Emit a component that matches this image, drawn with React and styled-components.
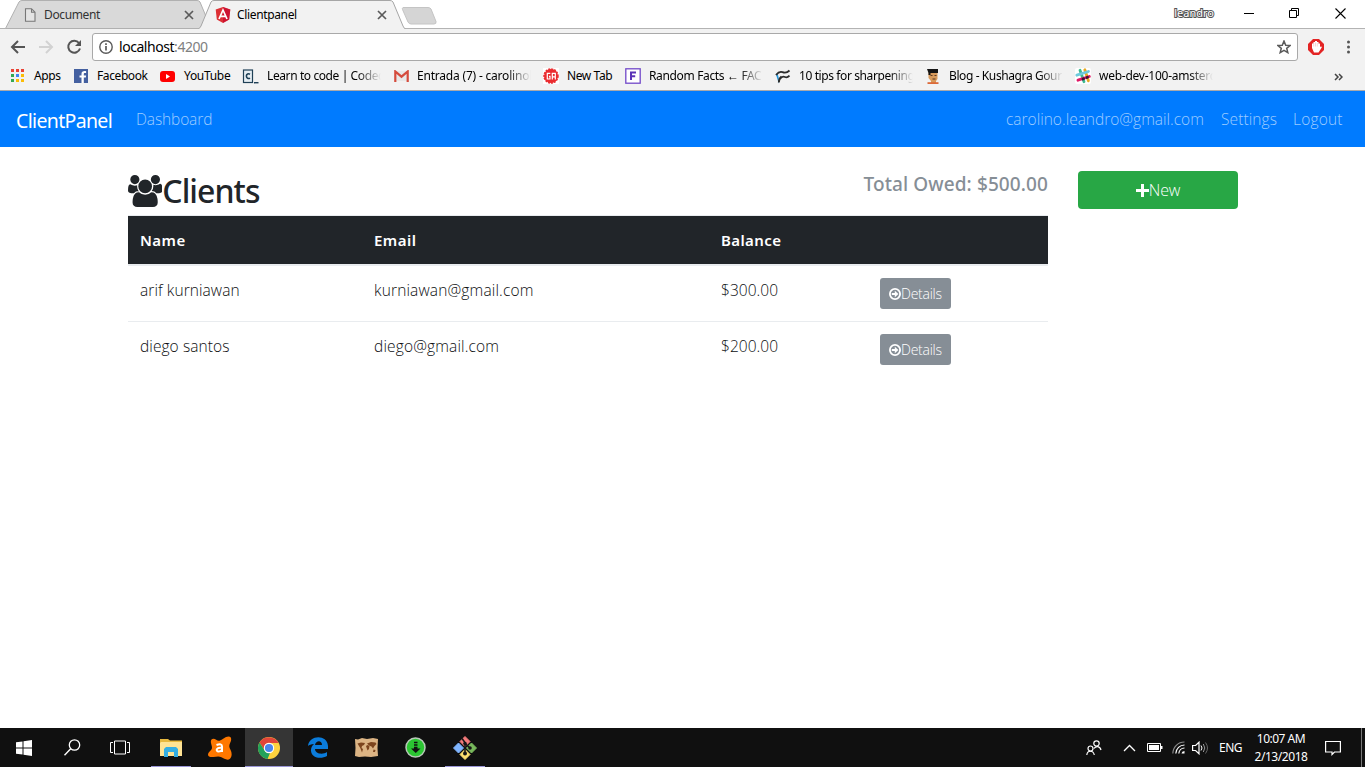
import React from "react";
import styled, { createGlobalStyle } from "styled-components";

const GlobalStyle = createGlobalStyle`
  * { box-sizing: border-box; }
  body { margin: 0; background: #fff; overflow: hidden; font-family: "Open Sans", "Noto Sans", sans-serif; }
  svg { display: block; flex: none; }
`;

const Screen = styled.div`
  width: 1365px;
  height: 767px;
  display: flex;
  flex-direction: column;
  background: #fff;
`;

/* ---------- Browser frame ---------- */
const TitleBar = styled.div`
  height: 29px;
  flex: none;
  display: flex;
  padding-left: 5px;
  border-bottom: 1px solid #b3b3b3;
  font: 400 12px/28px "Noto Sans", sans-serif;
`;
const Tab = styled.div`
  position: relative;
  width: 206px;
  height: 29px;
  flex: none;
  display: flex;
  align-items: center;
  padding: 0 17px 0 ${(p) => (p.$active ? 17 : 19)}px;
  margin-left: ${(p) => (p.$active ? -13 : 0)}px;
  z-index: ${(p) => (p.$active ? 2 : 1)};
`;
const TabShape = styled.svg`
  position: absolute;
  left: 0;
  top: 0;
  z-index: -1;
`;
const TabTitle = styled.span`
  flex: 1;
  margin-left: ${(p) => p.$gap}px;
  letter-spacing: ${(p) => p.$ls}px;
  color: ${(p) => (p.$active ? "#000" : "#333")};
  white-space: nowrap;
`;
const NewTab = styled.svg`
  margin: 6px 0 0 -3px;
`;
const WindowControls = styled.div`
  margin-left: auto;
  display: flex;
  align-items: center;
  padding-right: 19px;
`;
const Profile = styled.span`
  font-size: 11px;
  line-height: 26px;
  margin-top: -2px;
  letter-spacing: 0;
  color: #fff;
  -webkit-text-stroke: 2px #555;
  paint-order: stroke fill;
  margin-right: 29px;
`;
const Control = styled.svg`
  margin-left: ${(p) => p.$gap || 0}px;
  margin-top: ${(p) => p.$top || 0}px;
`;

const ToolBar = styled.div`
  height: 34px;
  flex: none;
  display: flex;
  align-items: center;
  padding: 0 10px 0 10px;
  background: #f2f2f2;
`;
const NavIcon = styled.svg`
  margin-right: ${(p) => p.$gap}px;
  margin-top: 2px;
`;
const Address = styled.div`
  width: 1206px;
  height: 28px;
  margin-top: 1px;
  display: flex;
  align-items: center;
  padding: 0 6px 0 6px;
  background: #fff;
  border: 1px solid #a9a9a9;
  border-radius: 3px;
  font: 400 14px/26px "Noto Sans", sans-serif;
  color: #000;
`;
const Url = styled.span`
  flex: 1;
  margin-left: 6px;
  letter-spacing: -0.45px;
  span { color: #808080; }
`;
const Bookmarks = styled.div`
  height: 28px;
  flex: none;
  display: flex;
  align-items: center;
  padding-left: 10px;
  background: #f2f2f2;
  border-bottom: 1px solid #a9a9ab;
  font: 400 12px/24px "Noto Sans", sans-serif;
  color: #000;
`;
const Bookmark = styled.div`
  width: ${(p) => p.$w}px;
  flex: none;
  display: flex;
  align-items: center;
  height: 27px;
  svg { margin-top: -1px; }
`;
const BookmarkText = styled.span`
  width: ${(p) => p.$w}px;
  margin: -1px 0 0 ${(p) => p.$gap}px;
  letter-spacing: ${(p) => p.$ls}px;
  white-space: nowrap;
  mask-image: ${(p) => (p.$fade ? "linear-gradient(90deg, #000 calc(100% - 24px), transparent)" : "none")};
`;
const More = styled.svg`
  margin-left: auto;
  margin-right: 22px;
`;

/* ---------- Client panel page ---------- */
const Navbar = styled.nav`
  height: 56px;
  flex: none;
  display: flex;
  align-items: center;
  padding: 0 22px 0 16px;
  background: #007bff;
  color: #fff;
`;
const Brand = styled.span`
  width: 120px;
  font: 400 19.5px/30px "Noto Sans", sans-serif;
  letter-spacing: -0.66px;
  padding-top: 3px;
`;
const NavLink = styled.a`
  font-size: 15.5px;
  font-weight: 300;
  line-height: 24px;
  color: rgba(255, 255, 255, 0.62);
  letter-spacing: ${(p) => p.$ls}px;
  width: ${(p) => p.$w}px;
  white-space: nowrap;
  margin-left: ${(p) => (p.$first ? "auto" : 0)};
`;
const Page = styled.main`
  flex: 1;
  display: flex;
  gap: 30px;
  padding: 24px 127px 0 128px;
  color: #212529;
`;
const Main = styled.section`
  width: 920px;
`;
const Heading = styled.div`
  height: 44px;
  display: flex;
  justify-content: space-between;
`;
const Title = styled.h2`
  margin: 0;
  display: flex;
  align-items: center;
  font: 500 32px/38px "Noto Sans", sans-serif;
  letter-spacing: -0.95px;
  height: 40px;
`;
const Total = styled.h5`
  margin: 0;
  font: 500 19px/26px "Noto Sans", sans-serif;
  letter-spacing: 0.1px;
  color: #868e96;
  white-space: nowrap;
`;
const Table = styled.div`
  border-top: 1px solid #e9ecef;
`;
const Row = styled.div`
  display: grid;
  grid-template-columns: 234px 347px 159px 1fr;
  height: ${(p) => (p.$first ? 55 : 57)}px;
  padding: 12px 12px 0;
  border-top: ${(p) => (p.$first ? 0 : 1)}px solid #e9ecef;
  font-size: 15.5px;
  font-weight: 300;
  line-height: 25px;
  color: #0c0e10;
`;
const HeadRow = styled(Row)`
  height: 50px;
  border-top: 0;
  border-bottom: 2px solid #e9ecef;
  background: #212529;
  color: #fff;
  font: 600 15px/25px "Noto Sans", sans-serif;
`;
const Cell = styled.span`
  letter-spacing: ${(p) => p.$ls || 0}px;
`;
const DetailsButton = styled.button`
  display: flex;
  align-items: center;
  width: 71px;
  height: 31px;
  padding: 1px 0 0 9px;
  border: 0;
  border-radius: 3px;
  background: #868e96;
  color: #fff;
  font: 300 14px/30px "Open Sans", sans-serif;
  letter-spacing: -0.25px;
`;
const NewButton = styled.button`
  width: 160px;
  height: 38px;
  display: flex;
  align-items: center;
  justify-content: center;
  border: 0;
  border-radius: 4px;
  background: #28a745;
  color: #fff;
  font: 300 16px/38px "Open Sans", sans-serif;
  letter-spacing: -0.2px;
`;

/* ---------- Taskbar ---------- */
const Taskbar = styled.footer`
  height: 39px;
  flex: none;
  display: flex;
  background: #101010;
  color: #fff;
`;
const Task = styled.div`
  width: ${(p) => p.$w || 49}px;
  height: 39px;
  display: flex;
  align-items: center;
  justify-content: center;
  background: ${(p) => (p.$active ? "#353535" : "transparent")};
  box-shadow: ${(p) => (p.$open ? "inset 0 -1px #9b97d8" : "none")};
  margin-left: ${(p) => p.$gap || 0}px;
  padding-left: ${(p) => p.$shift || 0}px;
`;
const Tray = styled.div`
  margin-left: auto;
  display: flex;
  align-items: center;
  font: 400 12px/18px "Noto Sans", sans-serif;
`;
const TrayItem = styled.div`
  width: ${(p) => p.$w}px;
  white-space: nowrap;
  letter-spacing: ${(p) => p.$ls || 0}px;
`;
const Clock = styled.div`
  width: 72px;
  text-align: center;
  margin-right: 8px;
  div { white-space: nowrap; }
  div:first-child { letter-spacing: -0.5px; }
  div:last-child { letter-spacing: -0.45px; }
`;
const ShowDesktop = styled.div`
  width: 4px;
  height: 39px;
  border-left: 1px solid #777;
`;

const CloseX = () => (
  <svg width="10" height="10" viewBox="0 0 10 10"><path d="M1 1l8 8M9 1l-8 8" stroke="#5a5a5a" strokeWidth="1.7" /></svg>
);

const UsersIcon = () => (
  <svg width="34.3" height="32" viewBox="0 -1536 1920 1792">
    <path transform="scale(1,-1)" fill="#212529" d="M593 640q-162 -5 -265 -128h-134q-82 0 -138 40.5t-56 118.5q0 353 124 353q6 0 43.5 -21t97.5 -42.5t119 -21.5q67 0 133 23q-5 -37 -5 -66q0 -159 93 -283zM1664 3q0 -120 -73 -189.5t-194 -69.5h-874q-121 0 -194 69.5t-73 189.5q0 53 3.5 103.5t14 109t26.5 108.5t43 97.5t62 81t85.5 53.5t111.5 20q10 0 43 -21.5t73 -48t107 -48t135 -21.5t135 21.5t107 48t73 48t43 21.5q61 0 111.5 -20t85.5 -53.5t62 -81t43 -97.5t26.5 -108.5t14 -109t3.5 -103.5zM640 1280q0 -106 -75 -181t-181 -75t-181 75t-75 181t75 181t181 75t181 -75t75 -181zM1344 896q0 -159 -112.5 -271.5t-271.5 -112.5t-271.5 112.5t-112.5 271.5t112.5 271.5t271.5 112.5t271.5 -112.5t112.5 -271.5zM1920 671q0 -78 -56 -118.5t-138 -40.5h-134q-103 123 -265 128q93 124 93 283q0 29 -5 66q66 -23 133 -23q59 0 119 21.5t97.5 42.5t43.5 21q124 0 124 -353zM1792 1280q0 -106 -75 -181t-181 -75t-181 75t-75 181t75 181t181 75t181 -75t75 -181z" />
  </svg>
);

const AppsIcon = () => (
  <svg width="14" height="14" viewBox="0 0 14 14">
    {["#ea4335", "#ea4335", "#ea4335", "#34a853", "#4285f4", "#fbbc05", "#34a853", "#fbbc05", "#fbbc05"].map((c, i) => (
      <rect key={i} x={1 + (i % 3) * 5} y={Math.floor(i / 3) * 5} width="3" height="3" fill={c} />
    ))}
  </svg>
);
const FacebookIcon = () => (
  <svg width="14" height="14" viewBox="0 0 14 14"><rect width="14" height="14" fill="#4460a0" /><path d="M9.8 14V8.6h2l.3-2.2H9.8V5.2c0-.7.3-1.1 1.1-1.1h1.2V2.2c-2.9-.5-4.6.4-4.6 2.7v1.5h-2v2.2h2V14z" fill="#fff" /></svg>
);
const YoutubeIcon = () => (
  <svg width="15" height="11" viewBox="0 0 15 11"><rect width="15" height="11" rx="3" fill="#f00" /><path d="M6 3l4 2.5L6 8z" fill="#fff" /></svg>
);
const CodecademyIcon = () => (
  <svg width="17" height="15" viewBox="0 0 17 15"><rect x="1.500" y="1" width="9" height="12.500" fill="#e6eef3" stroke="#1f4056" strokeWidth="1.200" /><path d="M8 5.200c-1.600-1-3.600-.4-3.600 1.900s2 3 3.600 2" fill="none" stroke="#1f4056" strokeWidth="1.600" /><path d="M12 13.700h4.500" stroke="#1f4056" strokeWidth="1.400" /></svg>
);
const GmailIcon = () => (
  <svg width="15" height="12" viewBox="0 0 15 12"><rect x="1" y="1" width="13" height="10" fill="#e8e8e8" /><path d="M1.300 12V1.500l6.200 5.200 6.200-5.200V12" fill="none" stroke="#d54b3d" strokeWidth="2.200" /></svg>
);
const GaIcon = () => (
  <svg width="16" height="16" viewBox="0 0 16 16"><rect width="16" height="16" fill="#fff" /><circle cx="8" cy="8" r="7" fill="#ea2b2f" stroke="#ea2b2f" strokeWidth="1.500" strokeDasharray="2 1" /><path d="M7.300 5.300H4.300v5.700H7V8.300H6M9.300 11.600V5.300h3v6.300M9.300 8.800h3" fill="none" stroke="#fff" strokeWidth="1.200" /></svg>
);
const FIcon = () => (
  <svg width="16" height="16" viewBox="0 0 16 16"><rect x=".8" y=".8" width="14.400" height="14.400" fill="#fff" stroke="#7148c8" strokeWidth="1.300" /><path d="M6 12V4.600h5M6 8.200h4.200" fill="none" stroke="#5b33b8" strokeWidth="2" /></svg>
);
const WaveIcon = () => (
  <svg width="16" height="15" viewBox="0 0 16 15"><path d="M.8 5l3 9.500V9L2.600 4.600z" fill="#2496dc" /><path d="M1 6C3 3.500 4.500 2 7.500 3.200s5 .3 7-1.700M5 10C6.500 7.500 8 7 10 8s3 .2 4.500-1.300M3.800 13.500c0-3 .5-4.500 2.700-6" fill="none" stroke="#2b2b2b" strokeWidth="1.800" /></svg>
);
const FaceIcon = () => (
  <svg width="14" height="16" viewBox="0 0 14 16"><path d="M2.500 4h9v7l-1.500 2v2H5v-2l-2.500-3z" fill="#d79a5b" /><path d="M1 1h11v4H4.500v2H2.500V5z" fill="#151515" /><path d="M4.500 7.500h2M8.500 7.500h2M6.500 11h3" stroke="#5b3820" strokeWidth="1.200" /><path d="M1.500 14.200h11V16h-11z" fill="#dc6a3a" /></svg>
);
const SlackIcon = () => (
  <svg width="16" height="16" viewBox="0 0 16 16"><rect width="16" height="16" rx="2" fill="#fff" /><g strokeWidth="2.800" strokeLinecap="round"><path d="M5 2.200l4 11.600" stroke="#3eb991" /><path d="M9.800 1.800l3.600 11" stroke="#e9a820" /><path d="M1.800 7.200L13.500 3.500" stroke="#6ecadc" /><path d="M3 12.200l11.300-3.700" stroke="#e01765" /><path d="M8 11l.6-.2M12 9.500l.5-.2" stroke="#3b1535" /></g></svg>
);

const bookmarks = [
  { icon: AppsIcon, text: "Apps", w: 64, gap: 10, tw: 32, ls: -0.4 },
  { icon: FacebookIcon, text: "Facebook", w: 86, gap: 9, tw: 56, ls: -0.4 },
  { icon: YoutubeIcon, text: "YouTube", w: 82, gap: 9, tw: 52, ls: -0.3 },
  { icon: CodecademyIcon, text: "Learn to code | Codec", w: 152, gap: 8, tw: 114, ls: -0.4, fade: true },
  { icon: GmailIcon, text: "Entrada (7) - carolinol", w: 149, gap: 8, tw: 114, ls: -0.2, fade: true },
  { icon: GaIcon, text: "New Tab", w: 82, gap: 8, tw: 52, ls: -0.4 },
  { icon: FIcon, text: "Random Facts ← FAC", w: 150, gap: 8, tw: 114, ls: -0.35, fade: true },
  { icon: WaveIcon, text: "10 tips for sharpening", w: 151, gap: 8, tw: 114, ls: -0.4, fade: true },
  { icon: FaceIcon, text: "Blog - Kushagra Gour", w: 149, gap: 9, tw: 114, ls: -0.4, fade: true },
  { icon: SlackIcon, text: "web-dev-100-amsterd", w: 150, gap: 8, tw: 114, ls: -0.25, fade: true },
];

const clients = [
  { name: "arif kurniawan", email: "kurniawan@gmail.com", balance: "$300.00" },
  { name: "diego santos", email: "diego@gmail.com", balance: "$200.00" },
];

function Browser() {
  return (
    <>
      <TitleBar>
        <Tab>
          <TabShape width="206" height="29" viewBox="0 0 206 29"><path d="M.5 28.500L14 2Q15 .5 17 .5H192Q194 .5 195 2L206 28.500z" fill="#d9d9d9" stroke="#b0b0b0" /></TabShape>
          <svg width="12" height="14" viewBox="0 0 12 14"><path d="M1.500.700h6L11 4.200v9H1.500zM7.500.700V4.200H11" fill="#e4e4e4" stroke="#777" strokeWidth="1.100" /></svg>
          <TabTitle $gap={8} $ls={-0.38}>Document</TabTitle>
          <CloseX />
        </Tab>
        <Tab $active>
          <TabShape width="208" height="29" viewBox="0 0 208 29"><path d="M0 29.500Q2 28 3 26L13 2Q14 .5 16 .5H192Q194 .5 195 2L205 26Q206 28.500 208 29.500z" fill="#f2f2f2" stroke="#a6a6a6" /></TabShape>
          <svg width="16" height="16" viewBox="0 0 16 16"><path d="M8 0l7.300 2.600-1.100 10L8 16l-6.200-3.400-1.100-10z" fill="#dd3035" /><path d="M8 0l7.300 2.600-1.100 10L8 16z" fill="#c3002f" opacity=".6" /><path d="M4 12L8 3l4 9M5.600 9.300h4.800" fill="none" stroke="#fff" strokeWidth="1.700" /></svg>
          <TabTitle $active $gap={6} $ls={-0.35}>Clientpanel</TabTitle>
          <CloseX />
        </Tab>
        <NewTab width="36" height="20" viewBox="0 0 36 20"><path d="M2 1.500H27Q29 1.500 30 3L35 15.500Q35.500 18 33 18H10Q8 18 7 16L1.500 3.500Q1 2 2 1.500z" fill="#d5d5d5" stroke="#c4c4c4" /></NewTab>
        <WindowControls>
          <Profile>leandro</Profile>
          <Control $gap={1} $top={-2} width="11" height="11"><path d="M0 5.500h10" stroke="#000" /></Control>
          <Control $gap={34} $top={-1} width="11" height="11"><path d="M.5 2.500h7v7h-7zM2.500 2.500v-2h7v7h-2" fill="none" stroke="#000" /></Control>
          <Control $gap={35} $top={-2} width="11" height="11"><path d="M.5.500l10 10M10.500.500l-10 10" stroke="#000" strokeWidth="1.100" /></Control>
        </WindowControls>
      </TitleBar>
      <ToolBar>
        <NavIcon $gap={12} width="16" height="14" viewBox="0 0 16 14"><path d="M15 7H2.500M8 1L2 7l6 6" fill="none" stroke="#555" strokeWidth="2" /></NavIcon>
        <NavIcon $gap={12} width="16" height="14" viewBox="0 0 16 14"><path d="M1 7h12.500M8 1l6 6-6 6" fill="none" stroke="#d2d2d2" strokeWidth="2" /></NavIcon>
        <NavIcon $gap={10} width="16" height="16" viewBox="0 0 16 16"><path d="M13 4A6 6 0 1 0 14 9.500" fill="none" stroke="#555" strokeWidth="2" /><path d="M15 1v6H9z" fill="#555" /></NavIcon>
        <Address>
          <svg width="14" height="14" viewBox="0 0 14 14"><circle cx="7" cy="7" r="6.200" fill="none" stroke="#5a5a5a" strokeWidth="1.400" /><path d="M7 6v4.500M7 3.300v1.600" stroke="#5a5a5a" strokeWidth="1.700" /></svg>
          <Url>localhost<span>:4200</span></Url>
          <svg width="14" height="14" viewBox="0 0 14 14"><path d="M7 1l1.700 4.200 4.400.3-3.400 2.800 1.100 4.300L7 10.300l-3.800 2.300 1.100-4.300L.9 5.500l4.400-.3z" fill="none" stroke="#5a5a5a" strokeWidth="1.500" /></svg>
        </Address>
        <Control $gap={10} $top={2} width="16" height="16" viewBox="0 0 16 16"><path d="M5 0h6l5 5v6l-5 5H5l-5-5V5z" fill="#e32424" /><path d="M4 9V4.500h1.500V3H7V2h2v1h1.500v1.500H12V8l1.200-.8.6 1.300L10.500 13.500H6z" fill="#fff" /><path d="M5.700 4.500v3M7.500 3.500v4M9.300 4v3.500" stroke="#eaa" strokeWidth=".5" /></Control>
        <Control $gap={22} $top={2} width="5" height="14" viewBox="0 0 5 14"><g fill="#555"><circle cx="2.500" cy="2" r="1.500" /><circle cx="2.500" cy="7" r="1.500" /><circle cx="2.500" cy="12" r="1.500" /></g></Control>
      </ToolBar>
      <Bookmarks>
        {bookmarks.map(({ icon: Icon, ...b }) => (
          <Bookmark key={b.text} $w={b.w}>
            <Icon />
            <BookmarkText $w={b.tw} $gap={b.gap} $ls={b.ls} $fade={b.fade}>{b.text}</BookmarkText>
          </Bookmark>
        ))}
        <More width="9" height="8" viewBox="0 0 9 8"><path d="M1 1l3 3-3 3M5 1l3 3-3 3" fill="none" stroke="#444" strokeWidth="1.500" /></More>
      </Bookmarks>
    </>
  );
}

function ClientPanel() {
  return (
    <>
      <Navbar>
        <Brand>ClientPanel</Brand>
        <NavLink $w={90} $ls={-0.12}>Dashboard</NavLink>
        <NavLink $first $w={215} $ls={0}>carolino.leandro@gmail.com</NavLink>
        <NavLink $w={72} $ls={0.1}>Settings</NavLink>
        <NavLink $w={50} $ls={0.2}>Logout</NavLink>
      </Navbar>
      <Page>
        <Main>
          <Heading>
            <Title><UsersIcon />Clients</Title>
            <Total>Total Owed: $500.00</Total>
          </Heading>
          <Table>
            <HeadRow><Cell $ls={0.45}>Name</Cell><Cell $ls={0.5}>Email</Cell><Cell $ls={0.4}>Balance</Cell><Cell /></HeadRow>
            {clients.map((c, i) => (
              <Row key={c.email} $first={i === 0}>
                <Cell $ls={0.08}>{c.name}</Cell>
                <Cell $ls={0.15}>{c.email}</Cell>
                <Cell $ls={0.05}>{c.balance}</Cell>
                <DetailsButton>
                  <svg width="12" height="12" viewBox="0 0 12 12"><circle cx="6" cy="6" r="5.100" fill="none" stroke="#fff" strokeWidth="1.800" /><path d="M2.800 5h3V2.800L9.400 6 5.800 9.200V7h-3z" fill="#fff" /></svg>
                  Details
                </DetailsButton>
              </Row>
            ))}
          </Table>
        </Main>
        <NewButton>
          <svg width="13" height="13" viewBox="0 0 13 13"><path d="M5 0h3v5h5v3H8v5H5V8H0V5h5z" fill="#fff" /></svg>
          New
        </NewButton>
      </Page>
    </>
  );
}

function TaskbarView() {
  return (
    <Taskbar>
      <Task $w={48}><svg width="16" height="16" viewBox="0 0 16 16"><path d="M0 2.300L6.500 1.400V7.500H0zM7.500 1.200L16 0v7.500H7.500zM0 8.500h6.500v6.100L0 13.700zM7.500 8.500H16V16l-8.500-1.200z" fill="#fff" /></svg></Task>
      <Task $w={48}><svg width="17" height="17" viewBox="0 0 17 17"><circle cx="10.500" cy="6" r="5.200" fill="none" stroke="#fff" strokeWidth="1.300" /><path d="M6.700 9.800L.5 16.300" stroke="#fff" strokeWidth="1.400" /></svg></Task>
      <Task $w={48}><svg width="20" height="15" viewBox="0 0 20 15"><path d="M4.500 1h11v13h-11zM3 2.500H.5v10H3M17 2.500h2.500v10H17" fill="none" stroke="#fff" /></svg></Task>
      <Task $w={40} $gap={7} $open>
        <svg width="22" height="19" viewBox="0 0 22 19"><path d="M0 1h8l2 1.500h12V18H0z" fill="#e8b93f" /><path d="M1 4h21v14H0V5z" fill="#ffe394" /><path d="M4 19v-8l2-2h10l2 2v8h-4v-5H8v5z" fill="#35aee3" /></svg>
      </Task>
      <Task $w={54} $shift={3}>
        <svg width="24" height="24" viewBox="0 0 24 24"><path d="M12 4.500C15 3.500 17 .5 20.500.500c3.500.2 3 3.500 1.800 6-1.500 3-1.300 4.500.2 7.200 1.700 3.300 1.500 7-.5 9-2.700 2.300-6-.2-8.500-1.400-2.500-1.300-5-.6-8-.3C2 21.300 0 20.500 0 18.500s2.500-3.300 3.600-5.200C4.500 11.500 3.500 9.500 3 7c-.5-2.500.3-4.300 2.500-4.300S9.500 5.500 12 4.500z" fill="#ff7800" /><path d="M8.500 9q5.500-2 5.500 1.500V16M14 11.800c-6-1-6.500 3.700-3.500 3.700 1.800 0 3-.8 3.500-1.800" fill="none" stroke="#fff" strokeWidth="2" /></svg>
      </Task>
      <Task $w={48} $active $open>
        <svg width="22" height="22" viewBox="0 0 22 22"><circle cx="11" cy="11" r="11" fill="#fdd23e" /><path d="M1.500 5.500A11 11 0 0 1 20.600 6H11a5 5 0 0 0-4.500 7z" fill="#e0453a" /><path d="M1.500 5.500L6.700 13.500A5 5 0 0 0 12 16l-2.500 6A11 11 0 0 1 1.500 5.500z" fill="#23a15a" /><circle cx="11" cy="11" r="5.200" fill="#fff" /><circle cx="11" cy="11" r="4.100" fill="#4a86ed" /></svg>
      </Task>
      <Task>
        <svg width="20" height="21" viewBox="0 0 20 21"><path d="M0 9C1-2 19-3 20 9v3H7c0 5 8 6 12 3v4c-5 3-15 3-16-5-.3-3 1-5 3-7-3 0-5 1-6 2zm7-1h7c0-5-6-5-7 0z" fill="#0b7cdb" /></svg>
      </Task>
      <Task>
        <svg width="23" height="19" viewBox="0 0 23 19"><path d="M0 1l3 .5L7 0l5 1 6-1 5 1-.5 9 .5 8-7 1-6-.5L4 19l-4-1 .5-8z" fill="#dcb484" /><path d="M2.500 5.500L6 4.500l4 .5-1 2-2 1-.5 2 1.500 1-1 3.500-1.500-4L4 8zM11 8l1.500-1 2 1-.5 3-1.500 1.500zM12 5.500l4-1.500 4.500.500 1 1.500-2 2-1.500 2.500-1.500-2-2.500-1zM18.500 11.500l2 .5-.5 2h-2z" fill="#7d451e" /></svg>
      </Task>
      <Task>
        <svg width="21" height="21" viewBox="0 0 21 21"><circle cx="10.500" cy="10.500" r="9.500" fill="#2bc532" stroke="#b8c9b8" strokeWidth="1.500" /><path d="M9 5.500h3.500M9 8h3.500" stroke="#111" strokeWidth="1.400" /><path d="M9 9.800h3.500V11.500H15.500l-4.750 4.500L6 11.500h3z" fill="#111" /></svg>
      </Task>
      <Task $w={40} $gap={5} $open>
        <svg width="24" height="24" viewBox="0 0 24 24"><g strokeLinejoin="round" strokeWidth="1"><path d="M12 .5l5 5-5 5-5-5z" fill="#f47b7b" stroke="#f47b7b" /><path d="M5.500 7l5 5-5 5-5-5z" fill="#80b5ff" stroke="#80b5ff" /><path d="M18.500 7l5 5-5 5-5-5z" fill="#78b85c" stroke="#78b85c" /><path d="M12 13.500l5 5-5 5-5-5z" fill="#ffe070" stroke="#ffe070" /></g><path d="M9 2.500l3 4v11M12 7.500l5 4.500" fill="none" stroke="#161616" strokeWidth="1.500" /><g fill="#161616"><circle cx="12" cy="7.500" r="1.800" /><circle cx="17" cy="12" r="1.800" /><circle cx="12" cy="17.500" r="2" /></g></svg>
      </Task>
      <Tray>
        <TrayItem $w={37}><svg width="16" height="16" viewBox="0 0 16 16" fill="none" stroke="#fff" strokeWidth="1.200"><circle cx="10.500" cy="3.500" r="2.700" /><path d="M8 8.500c2-3 6-2.500 7 1.500" /><circle cx="4.500" cy="8.500" r="2.500" /><path d="M.8 15c.5-5 6.500-5 7.500 0" /></svg></TrayItem>
        <TrayItem $w={24}><svg width="13" height="8" viewBox="0 0 13 8"><path d="M1 7l5.500-5.500L12 7" fill="none" stroke="#fff" strokeWidth="1.300" /></svg></TrayItem>
        <TrayItem $w={25}><svg width="16" height="9" viewBox="0 0 16 9"><path d="M.5.500h13v8H.5zM14.500 3v3" fill="none" stroke="#fff" /><path d="M2 2h10v5H2zM14 3h1.500v3H14z" fill="#fff" /></svg></TrayItem>
        <TrayItem $w={20}><svg width="13" height="13" viewBox="0 0 13 13" fill="none"><path d="M.8 12.500C1 6 6 1 12.500 1" stroke="#888" strokeWidth="1.200" /><path d="M3.800 12.500c.3-5 4-8.500 8.700-8.500M6.800 12.500c.3-3 2.500-5.500 5.700-5.500" stroke="#fff" strokeWidth="1.200" /><path d="M9.500 12.500q.3-2.500 3-2.500v2.500z" fill="#fff" /></svg></TrayItem>
        <TrayItem $w={27}><svg width="17" height="14" viewBox="0 0 17 14" fill="none"><path d="M.6 4.500h3L7 1.200v11.600L3.600 9.500h-3z" stroke="#fff" strokeWidth="1.200" /><path d="M9 4.500q2 2.500 0 5" stroke="#fff" /><path d="M11.300 3q3 4 0 8" stroke="#999" /><path d="M13.500 1.500q4 5.500 0 11" stroke="#666" /></svg></TrayItem>
        <TrayItem $w={26} $ls={-0.5}>ENG</TrayItem>
        <Clock><div>10:07 AM</div><div>2/13/2018</div></Clock>
        <TrayItem $w={36}><svg width="16" height="16" viewBox="0 0 16 16"><path d="M.6 1.500h14.800v10.500H9.500L7 14.500V12H.6z" fill="none" stroke="#fff" strokeWidth="1.200" /></svg></TrayItem>
        <ShowDesktop />
      </Tray>
    </Taskbar>
  );
}

export default function App() {
  return (
    <Screen>
      <GlobalStyle />
      <Browser />
      <ClientPanel />
      <TaskbarView />
    </Screen>
  );
}
